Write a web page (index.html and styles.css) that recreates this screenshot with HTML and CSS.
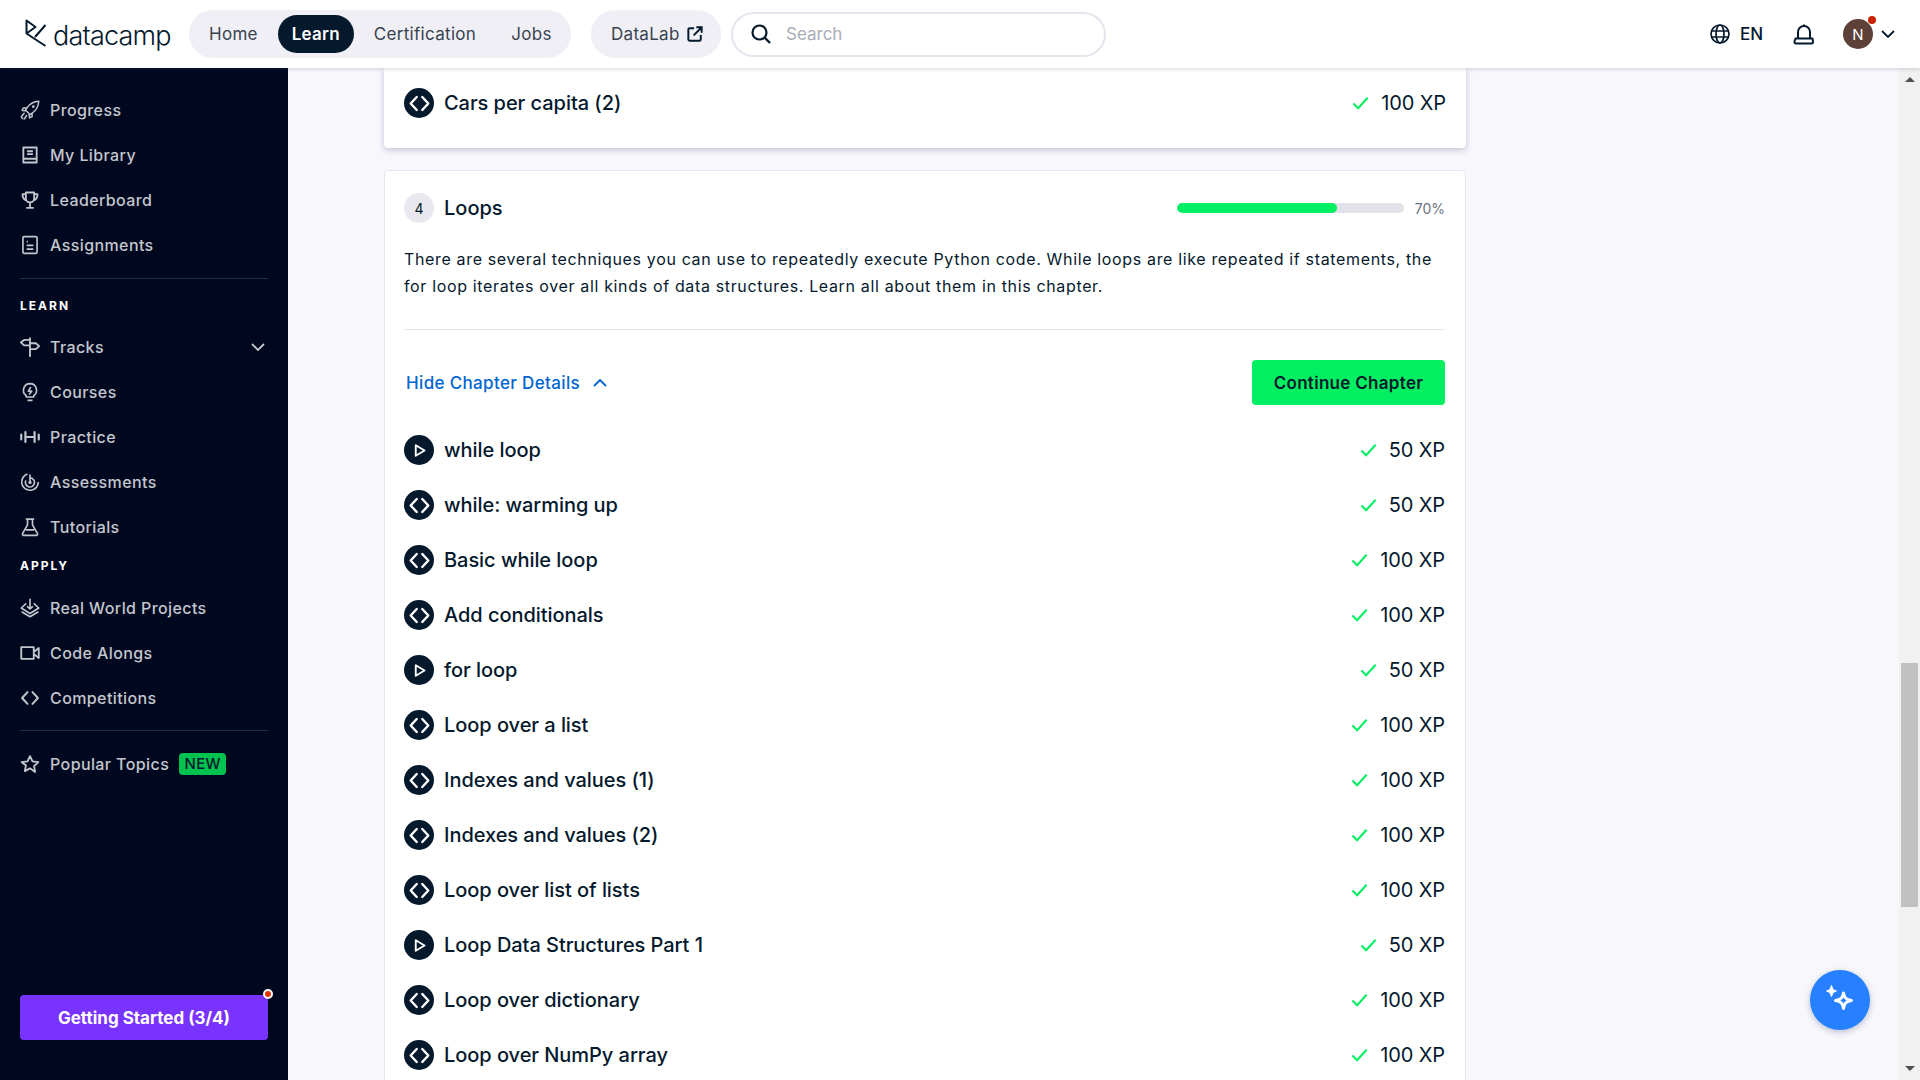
FILE: index.html
```html
<!DOCTYPE html>
<html lang="en">
<head>
<meta charset="utf-8">
<title>Intermediate Python - Loops</title>
<link rel="stylesheet" href="styles.css">
</head>
<body>
<svg class="defs" width="0" height="0" aria-hidden="true">
  <symbol id="i-code" viewBox="0 0 24 24"><path d="M9 5 2.500 12 9 19M15 5l6.500 7-6.500 7" fill="none" stroke="currentColor" stroke-width="2.400" stroke-linecap="round" stroke-linejoin="round"/></symbol>
  <symbol id="i-ex-code" viewBox="-1.500 -1.500 27 27"><path d="M9 5 2.500 12 9 19M15 5l6.500 7-6.500 7" fill="none" stroke="currentColor" stroke-width="2.600" stroke-linecap="round" stroke-linejoin="round"/></symbol>
  <symbol id="i-ex-play" viewBox="-8 -8 40 40"><path d="M6 3.500 20 12 6 20.500Z" fill="none" stroke="currentColor" stroke-width="3" stroke-linejoin="round"/></symbol>
  <symbol id="i-check" viewBox="0 0 18 14"><path d="M1.500 7.500 6.500 12.500 16.500 1.500" fill="none" stroke="currentColor" stroke-width="2.200"/></symbol>
  <symbol id="i-rocket" viewBox="0 0 24 24"><path d="M22.500 1.500c-6 .5-10.500 3-13.500 7L6.500 12l5.500 5.500 3.500-2.500c4.500-3 6.500-7.500 7-13.500ZM8 9.500H4l-1.500 3 4 .5M14.500 16v4l-3 1.500-.5-4M5 16l-3.500 4M8 18.500 5.500 22.500M3.500 22.500 2 21" fill="none" stroke="currentColor" stroke-width="1.800" stroke-linejoin="round" stroke-linecap="round"/><circle cx="16" cy="8" r="1.600" fill="currentColor"/></symbol>
  <symbol id="i-book" viewBox="0 0 24 24"><path d="M4 3h16v18H4ZM4 16.500h16M8.500 7.500h7M8.500 11h7" fill="none" stroke="currentColor" stroke-width="2.200" stroke-linejoin="round"/></symbol>
  <symbol id="i-trophy" viewBox="0 0 24 24"><path d="M7 3h10v7a5 5 0 0 1-10 0ZM7 5H3c0 4 1.500 6.500 5 7.500M17 5h4c0 4-1.500 6.500-5 7.500M12 15v6M7.500 21.500h9" fill="none" stroke="currentColor" stroke-width="2.200" stroke-linejoin="round"/></symbol>
  <symbol id="i-assign" viewBox="0 0 24 24"><path d="M3.500 3.500a1.500 1.500 0 0 1 1.500-1.500h14a1.500 1.500 0 0 1 1.500 1.500v17a1.500 1.500 0 0 1-1.500 1.500H5a1.500 1.500 0 0 1-1.500-1.500ZM8 8h1.500M8 12.500h8M8 17h8" fill="none" stroke="currentColor" stroke-width="2"/></symbol>
  <symbol id="i-tracks" viewBox="0 0 24 24"><path d="M12 1.500v21.500M12 3.500H5L1 6.500l4 3.500h7M12 7.500h7l4 3.500-4 3.500h-7" fill="none" stroke="currentColor" stroke-width="2.200" stroke-linejoin="round" stroke-linecap="round"/></symbol>
  <symbol id="i-bulb" viewBox="0 0 24 24"><path d="M12 2a8 8 0 0 0-4.500 14.500V18h9v-1.500A8 8 0 0 0 12 2ZM9 22h6M13 6l-3 5h4l-3 4" fill="none" stroke="currentColor" stroke-width="2" stroke-linejoin="round"/></symbol>
  <symbol id="i-dumb" viewBox="0 0 24 24"><path d="M6.500 6v12M17.500 6v12M6.500 12h11M1.500 9v6M22.500 9v6" fill="none" stroke="currentColor" stroke-width="2.600" stroke-linecap="round"/></symbol>
  <symbol id="i-radar" viewBox="0 0 24 24"><path d="M9 2.400A10 10 0 1 0 22 12M12 7a5.500 5.500 0 1 1-5 3M12 3v9" fill="none" stroke="currentColor" stroke-width="2"/><circle cx="12" cy="12.500" r="2" fill="currentColor"/></symbol>
  <symbol id="i-flask" viewBox="0 0 24 24"><path d="M7 2.500h10M9 2.500v7L3 20a1.500 1.500 0 0 0 1.300 2h15.400a1.500 1.500 0 0 0 1.300-2L15 9.500v-7M7 15.500h10" fill="none" stroke="currentColor" stroke-width="2" stroke-linejoin="round"/></symbol>
  <symbol id="i-layers" viewBox="0 0 24 24"><path d="M7.500 6.500 1.500 12 12 18.500 22.500 12l-6-5.500M2 16.500l10 6 10-6M12 1v12M8.500 10l3.500 3 3.500-3" fill="none" stroke="currentColor" stroke-width="2" stroke-linejoin="round"/></symbol>
  <symbol id="i-video" viewBox="0 0 24 24"><path d="M1.500 5h15v14h-15ZM16.500 11l6-5v12l-6-5" fill="none" stroke="currentColor" stroke-width="2.200" stroke-linejoin="round"/></symbol>
  <symbol id="i-star" viewBox="0 0 24 24"><path d="m12 2.500 3 6.400 7 .9-5.100 4.800 1.300 6.900L12 17.200l-6.200 3.300 1.300-6.900L2 9.800l7-.9Z" fill="none" stroke="currentColor" stroke-width="2.200" stroke-linejoin="round"/></symbol>
  <symbol id="i-chev" viewBox="0 0 14 8"><path d="M1 1 7 7l6-6" fill="none" stroke="currentColor" stroke-width="1.800"/></symbol>
</svg>

<header class="topbar">
  <a class="logo">
    <svg class="logo-mark" viewBox="0 0 22 30"><path d="M1.500 1.500 10.500 8 1.500 14.500ZM1.500 14.500 20.500 27M10 18 20.500 6" fill="none" stroke="#05192d" stroke-width="2" stroke-linejoin="round"/></svg>
    <span class="logo-text">datacamp</span>
  </a>
  <nav class="pill-nav main-nav">
    <a class="pill-link">Home</a>
    <a class="pill-link pill-active">Learn</a>
    <a class="pill-link">Certification</a>
    <a class="pill-link">Jobs</a>
  </nav>
  <a class="pill-nav datalab">DataLab
    <svg class="ext-icon" viewBox="0 0 18 18"><path d="M8 2.500H3a1.500 1.500 0 0 0-1.500 1.500v11A1.500 1.500 0 0 0 3 16.500h11a1.500 1.500 0 0 0 1.500-1.500v-5M7.500 10.500 16 2M10.500 1.500H16.500V7.500" fill="none" stroke="#05192d" stroke-width="2.200"/></svg>
  </a>
  <div class="search">
    <svg class="search-icon" viewBox="0 0 20 20"><circle cx="8.500" cy="8.500" r="7" fill="none" stroke="#05192d" stroke-width="2.200"/><path d="m13.500 13.500 5.500 5.500" stroke="#05192d" stroke-width="2.400"/></svg>
    <span class="search-text">Search</span>
  </div>
  <div class="top-right">
    <svg class="globe" viewBox="0 0 20 20"><g fill="none" stroke="#05192d" stroke-width="1.700"><circle cx="10" cy="10" r="9"/><ellipse cx="10" cy="10" rx="4" ry="9"/><path d="M1.500 7h17M1.500 13h17"/></g></svg>
    <span class="lang">EN</span>
    <svg class="bell" viewBox="0 0 22 22"><path d="M11 1.500v2M5 15V9a6 6 0 0 1 12 0v6M2.500 15.500h17l.5 3a1.500 1.500 0 0 1-1.500 2h-15.500a1.500 1.500 0 0 1-1.500-2Z" fill="none" stroke="#05192d" stroke-width="2" stroke-linejoin="round"/></svg>
    <div class="avatar">N<span class="avatar-dot"></span></div>
    <svg class="top-chev"><use href="#i-chev"/></svg>
  </div>
</header>

<div class="shell">
  <aside class="sidebar">
    <div class="side-group">
      <a class="side-item"><svg class="side-icon"><use href="#i-rocket"/></svg>Progress</a>
      <a class="side-item"><svg class="side-icon"><use href="#i-book"/></svg>My Library</a>
      <a class="side-item"><svg class="side-icon"><use href="#i-trophy"/></svg>Leaderboard</a>
      <a class="side-item"><svg class="side-icon"><use href="#i-assign"/></svg>Assignments</a>
    </div>
    <hr class="side-rule rule-a">
    <h4 class="side-head head-learn">LEARN</h4>
    <a class="side-item"><svg class="side-icon"><use href="#i-tracks"/></svg>Tracks<svg class="side-chev"><use href="#i-chev"/></svg></a>
    <a class="side-item"><svg class="side-icon"><use href="#i-bulb"/></svg>Courses</a>
    <a class="side-item"><svg class="side-icon"><use href="#i-dumb"/></svg>Practice</a>
    <a class="side-item"><svg class="side-icon"><use href="#i-radar"/></svg>Assessments</a>
    <a class="side-item"><svg class="side-icon"><use href="#i-flask"/></svg>Tutorials</a>
    <h4 class="side-head head-apply">APPLY</h4>
    <a class="side-item"><svg class="side-icon"><use href="#i-layers"/></svg>Real World Projects</a>
    <a class="side-item"><svg class="side-icon"><use href="#i-video"/></svg>Code Alongs</a>
    <a class="side-item"><svg class="side-icon"><use href="#i-code"/></svg>Competitions</a>
    <hr class="side-rule rule-b">
    <a class="side-item"><svg class="side-icon"><use href="#i-star"/></svg>Popular Topics<span class="new-badge">NEW</span></a>
    <button class="started">Getting Started (3/4)<span class="started-dot"></span></button>
  </aside>

  <main class="content">
    <section class="card card-prev">
      <div class="row">
        <span class="ex-icon"><svg><use href="#i-ex-code"/></svg></span>
        <span class="row-title">Cars per capita (2)</span>
        <svg class="check"><use href="#i-check"/></svg>
        <span class="xp">100 XP</span>
      </div>
    </section>

    <section class="card card-chapter">
      <div class="chapter-head">
        <span class="chapter-num">4</span>
        <h3 class="chapter-title">Loops</h3>
        <div class="progress"><div class="progress-fill" style="width:70.5%"></div></div>
        <span class="percent">70%</span>
      </div>
      <p class="chapter-desc">There are several techniques you can use to repeatedly execute Python code. While loops are like repeated if statements, the for loop iterates over all kinds of data structures. Learn all about them in this chapter.</p>
      <div class="chapter-actions">
        <a class="hide-link">Hide Chapter Details<svg class="hide-chev"><use href="#i-chev"/></svg></a>
        <button class="continue">Continue Chapter</button>
      </div>
      <div class="rows">
        <div class="row"><span class="ex-icon"><svg><use href="#i-ex-play"/></svg></span><span class="row-title">while loop</span><svg class="check"><use href="#i-check"/></svg><span class="xp">50 XP</span></div>
        <div class="row"><span class="ex-icon"><svg><use href="#i-ex-code"/></svg></span><span class="row-title">while: warming up</span><svg class="check"><use href="#i-check"/></svg><span class="xp">50 XP</span></div>
        <div class="row"><span class="ex-icon"><svg><use href="#i-ex-code"/></svg></span><span class="row-title">Basic while loop</span><svg class="check"><use href="#i-check"/></svg><span class="xp">100 XP</span></div>
        <div class="row"><span class="ex-icon"><svg><use href="#i-ex-code"/></svg></span><span class="row-title">Add conditionals</span><svg class="check"><use href="#i-check"/></svg><span class="xp">100 XP</span></div>
        <div class="row"><span class="ex-icon"><svg><use href="#i-ex-play"/></svg></span><span class="row-title">for loop</span><svg class="check"><use href="#i-check"/></svg><span class="xp">50 XP</span></div>
        <div class="row"><span class="ex-icon"><svg><use href="#i-ex-code"/></svg></span><span class="row-title">Loop over a list</span><svg class="check"><use href="#i-check"/></svg><span class="xp">100 XP</span></div>
        <div class="row"><span class="ex-icon"><svg><use href="#i-ex-code"/></svg></span><span class="row-title">Indexes and values (1)</span><svg class="check"><use href="#i-check"/></svg><span class="xp">100 XP</span></div>
        <div class="row"><span class="ex-icon"><svg><use href="#i-ex-code"/></svg></span><span class="row-title">Indexes and values (2)</span><svg class="check"><use href="#i-check"/></svg><span class="xp">100 XP</span></div>
        <div class="row"><span class="ex-icon"><svg><use href="#i-ex-code"/></svg></span><span class="row-title">Loop over list of lists</span><svg class="check"><use href="#i-check"/></svg><span class="xp">100 XP</span></div>
        <div class="row"><span class="ex-icon"><svg><use href="#i-ex-play"/></svg></span><span class="row-title">Loop Data Structures Part 1</span><svg class="check"><use href="#i-check"/></svg><span class="xp">50 XP</span></div>
        <div class="row"><span class="ex-icon"><svg><use href="#i-ex-code"/></svg></span><span class="row-title">Loop over dictionary</span><svg class="check"><use href="#i-check"/></svg><span class="xp">100 XP</span></div>
        <div class="row"><span class="ex-icon"><svg><use href="#i-ex-code"/></svg></span><span class="row-title">Loop over NumPy array</span><svg class="check"><use href="#i-check"/></svg><span class="xp">100 XP</span></div>
      </div>
    </section>

    <button class="fab" aria-label="AI assistant">
      <svg viewBox="0 0 32 32"><path d="M7.500 2c.5 3 1.500 4.500 4.500 5-3 .5-4 2-4.500 5-.5-3-1.500-4.500-4.500-5 3-.5 4-2 4.500-5Z" fill="#fff" stroke="#fff" stroke-width="1.500" stroke-linejoin="round"/><path d="M19.500 9c1 5 2.500 6.500 8 7.500-5.500 1-7 2.500-8 8-1-5.500-2.500-7-8-8 5.500-1 7-2.500 8-7.500Z" fill="none" stroke="#fff" stroke-width="3" stroke-linejoin="round"/></svg>
    </button>
  </main>

  <div class="scrollbar">
    <span class="arrow-up"></span>
    <div class="track"><div class="thumb"></div></div>
    <span class="arrow-down"></span>
  </div>
</div>
</body>
</html>
```
FILE: styles.css
```css
* { box-sizing: border-box; }
html, body { height: 100%; }
body {
  margin: 0;
  display: flex;
  flex-direction: column;
  overflow: hidden;
  font-family: Inter, "Noto Sans", sans-serif;
  color: #05192d;
  background: #f7f7fc;
}
.defs { position: absolute; }
a { color: inherit; text-decoration: none; }
button { font-family: inherit; border: 0; cursor: pointer; }

/* top bar */
.topbar {
  flex: 0 0 68px;
  display: flex;
  align-items: center;
  background: #fff;
  box-shadow: 0 1px 4px rgba(48, 57, 105, .22);
  position: relative;
  z-index: 3;
}
.logo { width: 189px; padding-left: 25px; display: flex; align-items: center; gap: 6px; }
.logo-mark { width: 22px; height: 30px; flex: none; }
.logo-text { font-size: 27px; letter-spacing: -.8px; font-weight: 300; line-height: 30px; margin-top: 4px; }
.pill-nav {
  height: 48px;
  background: #efeff5;
  border-radius: 24px;
  display: flex;
  align-items: center;
  font-size: 17px;
  letter-spacing: .3px;
  color: #38424f;
}
.main-nav { width: 382px; padding-left: 5px; }
.pill-link { height: 38px; display: flex; align-items: center; padding: 0 15px; border-radius: 19px; }
.pill-active { background: #05192d; color: #fff; font-weight: 600; width: 76px; justify-content: center; padding: 0; margin: 0 5px 0 5px; }
.pill-link:last-child { margin-left: 5px; }
.datalab { width: 130px; margin-left: 20px; padding-left: 20px; gap: 7px; }
.ext-icon { width: 16px; height: 16px; }
.search {
  width: 375px;
  height: 45px;
  margin-left: 10px;
  border: 2px solid #e5e5ee;
  border-radius: 23px;
  display: flex;
  align-items: center;
  padding-left: 18px;
}
.search-icon { width: 20px; height: 20px; }
.search-text { margin-left: 15px; font-size: 17px; color: #a8adb8; }
.top-right { margin-left: auto; padding-right: 25px; display: flex; align-items: center; position: relative; }
.globe { width: 20px; height: 20px; }
.lang { margin-left: 10px; font-size: 17px; font-weight: 500; width: 24px; }
.bell { width: 22px; height: 22px; margin-left: 29px; }
.avatar {
  width: 30px; height: 30px; margin-left: 28px;
  border-radius: 50%;
  background: #5d4037;
  color: #fff;
  font-size: 15px;
  display: flex; align-items: center; justify-content: center;
  position: relative;
}
.avatar-dot { position: absolute; width: 8px; height: 8px; border-radius: 50%; background: #c92100; right: -3px; top: -3px; }
.top-chev { width: 14px; height: 8px; margin-left: 8px; color: #05192d; }

/* shell */
.shell { flex: 1; min-height: 0; display: flex; position: relative; }

/* sidebar */
.sidebar {
  flex: 0 0 288px;
  background: #000820;
  padding: 19px 20px 40px;
  display: flex;
  flex-direction: column;
  color: #c4c6cd;
}
.side-group { display: flex; flex-direction: column; }
.side-item { height: 45px; flex: none; display: flex; align-items: center; font-size: 16px; font-weight: 500; letter-spacing: .4px; }
.side-icon { width: 20px; height: 20px; margin-right: 10px; flex: none; }
.side-chev { width: 14px; height: 8px; margin-left: auto; margin-right: 3px; }
.side-rule { width: 248px; height: 1px; margin: 0; border: 0; background: #232b44; flex: none; }
.rule-a { margin-top: 11px; }
.rule-b { margin: 10px 0 10px; }
.side-head { margin: 0; font-size: 12px; line-height: 16px; font-weight: 700; letter-spacing: 2px; color: #fff; }
.head-learn { padding: 19px 0 10px; }
.head-apply { padding: 9px 0 11px; }
.new-badge {
  margin-left: 10px;
  width: 47px; height: 22px;
  border-radius: 4px;
  background: #00c24e;
  color: #05192d;
  font-size: 15px;
  font-weight: 500;
  display: flex; align-items: center; justify-content: center;
  letter-spacing: .3px;
}
.started {
  margin-top: auto;
  height: 45px;
  flex: none;
  border-radius: 4px;
  background: #7933ff;
  color: #fff;
  font-size: 17px;
  font-weight: 700;
  position: relative;
}
.started-dot {
  position: absolute; right: -5px; top: -6px;
  width: 10px; height: 10px; border-radius: 50%;
  background: #dd3400;
  border: 2px solid #fff;
}

/* content */
.content { flex: 1; min-width: 0; overflow: hidden; padding: 0 0 0 96px; position: relative; }
.card {
  width: 1082px;
  background: #fff;
  border-radius: 0 0 4px 4px;
  padding: 20px;
}
.card-prev { height: 80px; box-shadow: 0 2px 6px rgba(48, 57, 105, .28); }
.card-chapter {
  margin-top: 22px;
  border: 1px solid #e5e5ee;
  border-radius: 4px 4px 0 0;
  padding: 22px 20px 30px 19px;
}
.chapter-head { height: 30px; display: flex; align-items: center; }
.chapter-num {
  width: 30px; height: 30px; border-radius: 50%;
  background: #e8e8ee; color: #05192d;
  font-size: 14px;
  display: flex; align-items: center; justify-content: center;
  flex: none;
}
.chapter-title { margin: 0 0 0 10px; font-size: 20px; font-weight: 500; }
.progress { margin-left: auto; width: 227px; height: 10px; background: #e2e2ea; border-radius: 5px; overflow: hidden; }
.progress-fill { height: 100%; background: #03ef62; border-radius: 5px; }
.percent { width: 41px; text-align: right; font-size: 14px; color: #6a7280; }
.chapter-desc { margin: 23px 0 0; padding-bottom: 29px; border-bottom: 1px solid #e5e5ee; font-size: 16px; letter-spacing: .65px; line-height: 27px; color: #05192d; }
.chapter-actions { margin-top: 30px; display: flex; align-items: center; justify-content: space-between; }
.hide-link { margin-left: 2px; color: #0065d1; font-size: 17px; letter-spacing: .35px; font-weight: 500; display: flex; align-items: center; }
.hide-chev { width: 14px; height: 8px; margin-left: 13px; transform: rotate(180deg); }
.continue { width: 193px; height: 45px; border-radius: 4px; background: #03ef62; color: #05192d; font-size: 17px; letter-spacing: .3px; font-weight: 600; }
.rows { margin-top: 30px; display: flex; flex-direction: column; gap: 25px; }
.row { height: 30px; display: flex; align-items: center; }
.ex-icon {
  width: 30px; height: 30px; border-radius: 50%;
  background: #05192d; color: #fff;
  display: flex; align-items: center; justify-content: center;
  flex: none;
}
.ex-icon svg { width: 25px; height: 25px; }
.row-title { margin-left: 10px; font-size: 20px; font-weight: 500; letter-spacing: -.05px; flex: 1; }
.check { width: 17px; height: 14px; color: #03ef62; margin-right: 12px; flex: none; }
.xp { font-size: 20px; font-weight: 400; letter-spacing: -.1px; }

/* floating action */
.fab {
  position: absolute;
  right: 29px; bottom: 50px;
  width: 60px; height: 60px;
  border-radius: 50%;
  padding: 14px;
  background: #2680ff;
  box-shadow: 0 2px 6px rgba(48, 57, 105, .3);
  display: flex;
}
.fab svg { width: 32px; height: 32px; }

/* scrollbar */
.scrollbar { flex: 0 0 21px; background: #f1f1f1; display: flex; flex-direction: column; align-items: center; }
.arrow-up, .arrow-down { width: 0; height: 0; border-left: 5px solid transparent; border-right: 5px solid transparent; flex: none; }
.arrow-up { border-bottom: 5px solid #505050; margin: 9px 0 7px; }
.arrow-down { border-top: 5px solid #505050; margin: 7px 0 9px; }
.track { flex: 1; width: 100%; padding-top: 574px; }
.thumb { width: 17px; height: 244px; margin: 0 auto; background: #c1c1c1; }
```
